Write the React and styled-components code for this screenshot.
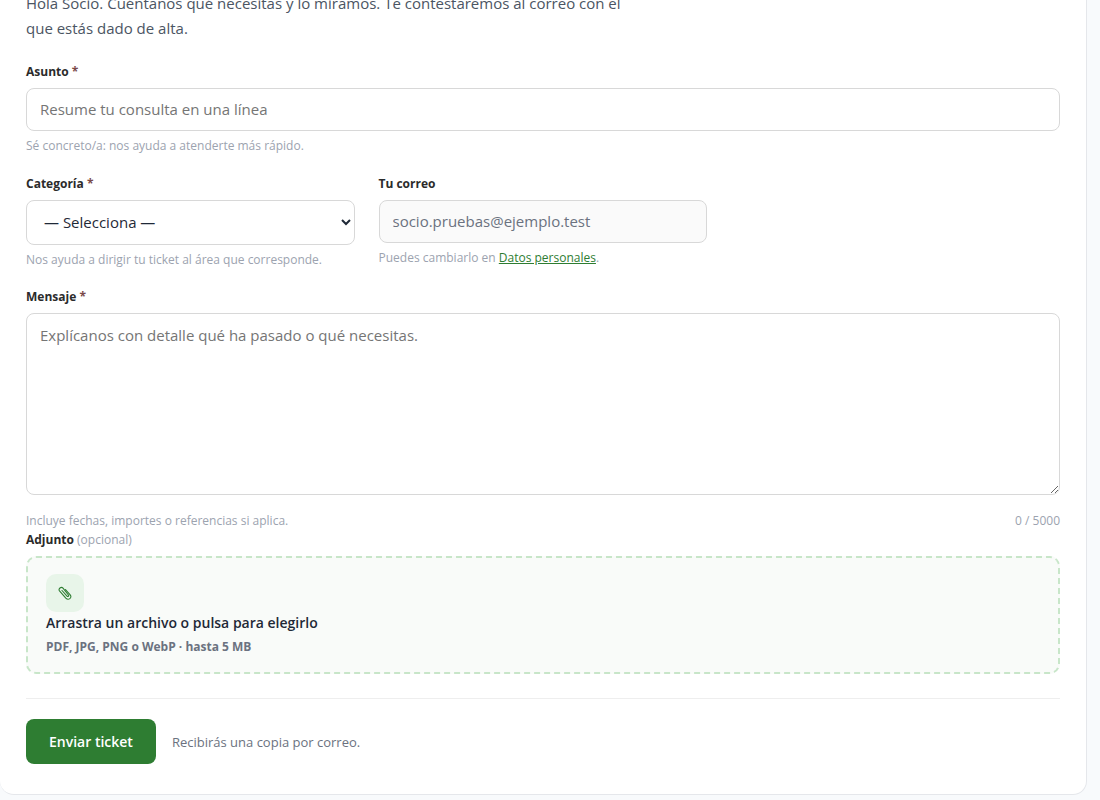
import { useState } from "react";
import styled, { createGlobalStyle, css } from "styled-components";

const GlobalStyle = createGlobalStyle`
  *,
  *::before,
  *::after {
    box-sizing: border-box;
  }

  body {
    margin: 0;
    background: #f8fafc;
    color: #1f2937;
    font-family: "Open Sans", "Noto Sans", sans-serif;
    font-size: 15px;
    line-height: 24px;
  }
`;

const Page = styled.div`
  padding: 0 13px 5px 0;
  overflow: hidden;
`;

const Card = styled.main`
  margin-top: -34px;
  padding: 24px 26px 30px;
  background: #fff;
  border: 1px solid #e5e7eb;
  border-left: 0;
  border-radius: 14px;
`;

const Intro = styled.p`
  max-width: 620px;
  margin: 0 0 22px;
  color: #4b5563;
  line-height: 25px;
`;

const Field = styled.div`
  margin-bottom: 20px;
`;

const FieldRow = styled.div`
  display: grid;
  grid-template-columns: 1fr 1fr;
  gap: 24px;
  max-width: 681px;
  margin-bottom: 19px;
`;

const Label = styled.label`
  display: block;
  margin-bottom: 7px;
  color: #2b2b2b;
  font-size: 12px;
  font-weight: 700;
  line-height: 18px;
`;

const Required = styled.span`
  color: #7a4a4a;
`;

const Optional = styled.span`
  color: #9ca3af;
  font-weight: 400;
`;

const control = css`
  display: block;
  width: 100%;
  border: 1px solid #d8d8d8;
  border-radius: 8px;
  background: #fff;
  color: #1f2937;
  font-family: inherit;
  font-size: 15px;
`;

const Input = styled.input`
  ${control}
  height: 43px;
  padding: 0 13px 2px;

  &:disabled {
    background: #fafafa;
    color: #6b7280;
  }

  &::placeholder {
    color: #757575;
  }
`;

const Select = styled.select`
  ${control}
  height: 45px;
  padding: 0 13px 2px;
`;

const Textarea = styled.textarea`
  ${control}
  height: 182px;
  padding: 10px 13px;
  line-height: 22px;
  resize: vertical;
`;

const Hint = styled.p`
  margin: 6px 0 0;
  color: #9ca3af;
  font-size: 12px;
  line-height: 18px;

  a {
    color: #2e7d32;
  }
`;

const HintRow = styled.div`
  display: flex;
  justify-content: space-between;
  margin: 11px 0 1px;
`;

const Dropzone = styled.label`
  display: block;
  padding: 16px 18px;
  border: 2px dashed #c8e6c9;
  border-radius: 10px;
  background: #f9fbf9;
  cursor: pointer;
`;

const FileInput = styled.input`
  position: absolute;
  width: 1px;
  height: 1px;
  opacity: 0;
`;

const DropIcon = styled.span`
  display: grid;
  place-items: center;
  width: 38px;
  height: 38px;
  border-radius: 10px;
  background: #e8f5e9;
  color: #2e7d32;
`;

const DropTitle = styled.span`
  display: block;
  font-size: 14px;
  font-weight: 600;
  line-height: 22px;
`;

const DropMeta = styled.span`
  display: block;
  margin-top: 4px;
  color: #6b7280;
  font-size: 12px;
  font-weight: 700;
  line-height: 18px;
`;

const Actions = styled.div`
  display: flex;
  align-items: center;
  gap: 16px;
  margin-top: 24px;
  padding-top: 20px;
  border-top: 1px solid #eeeeee;
  color: #6b7280;
  font-size: 13px;
`;

const Button = styled.button`
  height: 45px;
  padding: 0 23px;
  border: 0;
  border-radius: 8px;
  background: #2e7d32;
  color: #fff;
  font-family: inherit;
  font-size: 14px;
  font-weight: 600;
  cursor: pointer;
`;

const Paperclip = () => (
  <svg width="14" height="14" viewBox="0 0 14 14" fill="none" stroke="currentColor" aria-hidden="true">
    <path
      d="M4 4.5l5 5.6c.9 1 2.2-.1 1.4-1.1L5 2.2C3.3.2-.2 2.7 1.5 4.9l6.3 7.2c2.6 2.8 6.7-.4 4.4-3.2L7.5 3.5"
      strokeWidth="1.1"
      strokeLinecap="round"
      strokeLinejoin="round"
    />
  </svg>
);

export default function App() {
  const [message, setMessage] = useState("");

  return (
    <Page>
      <GlobalStyle />
      <Card>
        <Intro>
          Hola Socio. Cuéntanos qué necesitas y lo miramos. Te contestaremos al correo con el que
          estás dado de alta.
        </Intro>
        <form onSubmit={(e) => e.preventDefault()}>
          <Field>
            <Label htmlFor="asunto">
              Asunto <Required>*</Required>
            </Label>
            <Input id="asunto" type="text" placeholder="Resume tu consulta en una línea" />
            <Hint>Sé concreto/a: nos ayuda a atenderte más rápido.</Hint>
          </Field>

          <FieldRow>
            <div>
              <Label htmlFor="categoria">
                Categoría <Required>*</Required>
              </Label>
              <Select id="categoria">
                <option>— Selecciona —</option>
              </Select>
              <Hint>Nos ayuda a dirigir tu ticket al área que corresponde.</Hint>
            </div>
            <div>
              <Label htmlFor="correo">Tu correo</Label>
              <Input id="correo" type="email" defaultValue="socio.pruebas@ejemplo.test" disabled />
              <Hint>
                Puedes cambiarlo en <a href="#datos">Datos personales</a>.
              </Hint>
            </div>
          </FieldRow>

          <Label htmlFor="mensaje">
            Mensaje <Required>*</Required>
          </Label>
          <Textarea
            id="mensaje"
            maxLength={5000}
            value={message}
            onChange={(e) => setMessage(e.target.value)}
            placeholder="Explícanos con detalle qué ha pasado o qué necesitas."
          />
          <HintRow>
            <Hint>Incluye fechas, importes o referencias si aplica.</Hint>
            <Hint>{message.length} / 5000</Hint>
          </HintRow>

          <Label htmlFor="adjunto">
            Adjunto <Optional>(opcional)</Optional>
          </Label>
          <Dropzone>
            <FileInput id="adjunto" type="file" accept=".pdf,.jpg,.jpeg,.png,.webp" />
            <DropIcon>
              <Paperclip />
            </DropIcon>
            <DropTitle>Arrastra un archivo o pulsa para elegirlo</DropTitle>
            <DropMeta>PDF, JPG, PNG o WebP · hasta 5 MB</DropMeta>
          </Dropzone>

          <Actions>
            <Button type="submit">Enviar ticket</Button>
            <span>Recibirás una copia por correo.</span>
          </Actions>
        </form>
      </Card>
    </Page>
  );
}
